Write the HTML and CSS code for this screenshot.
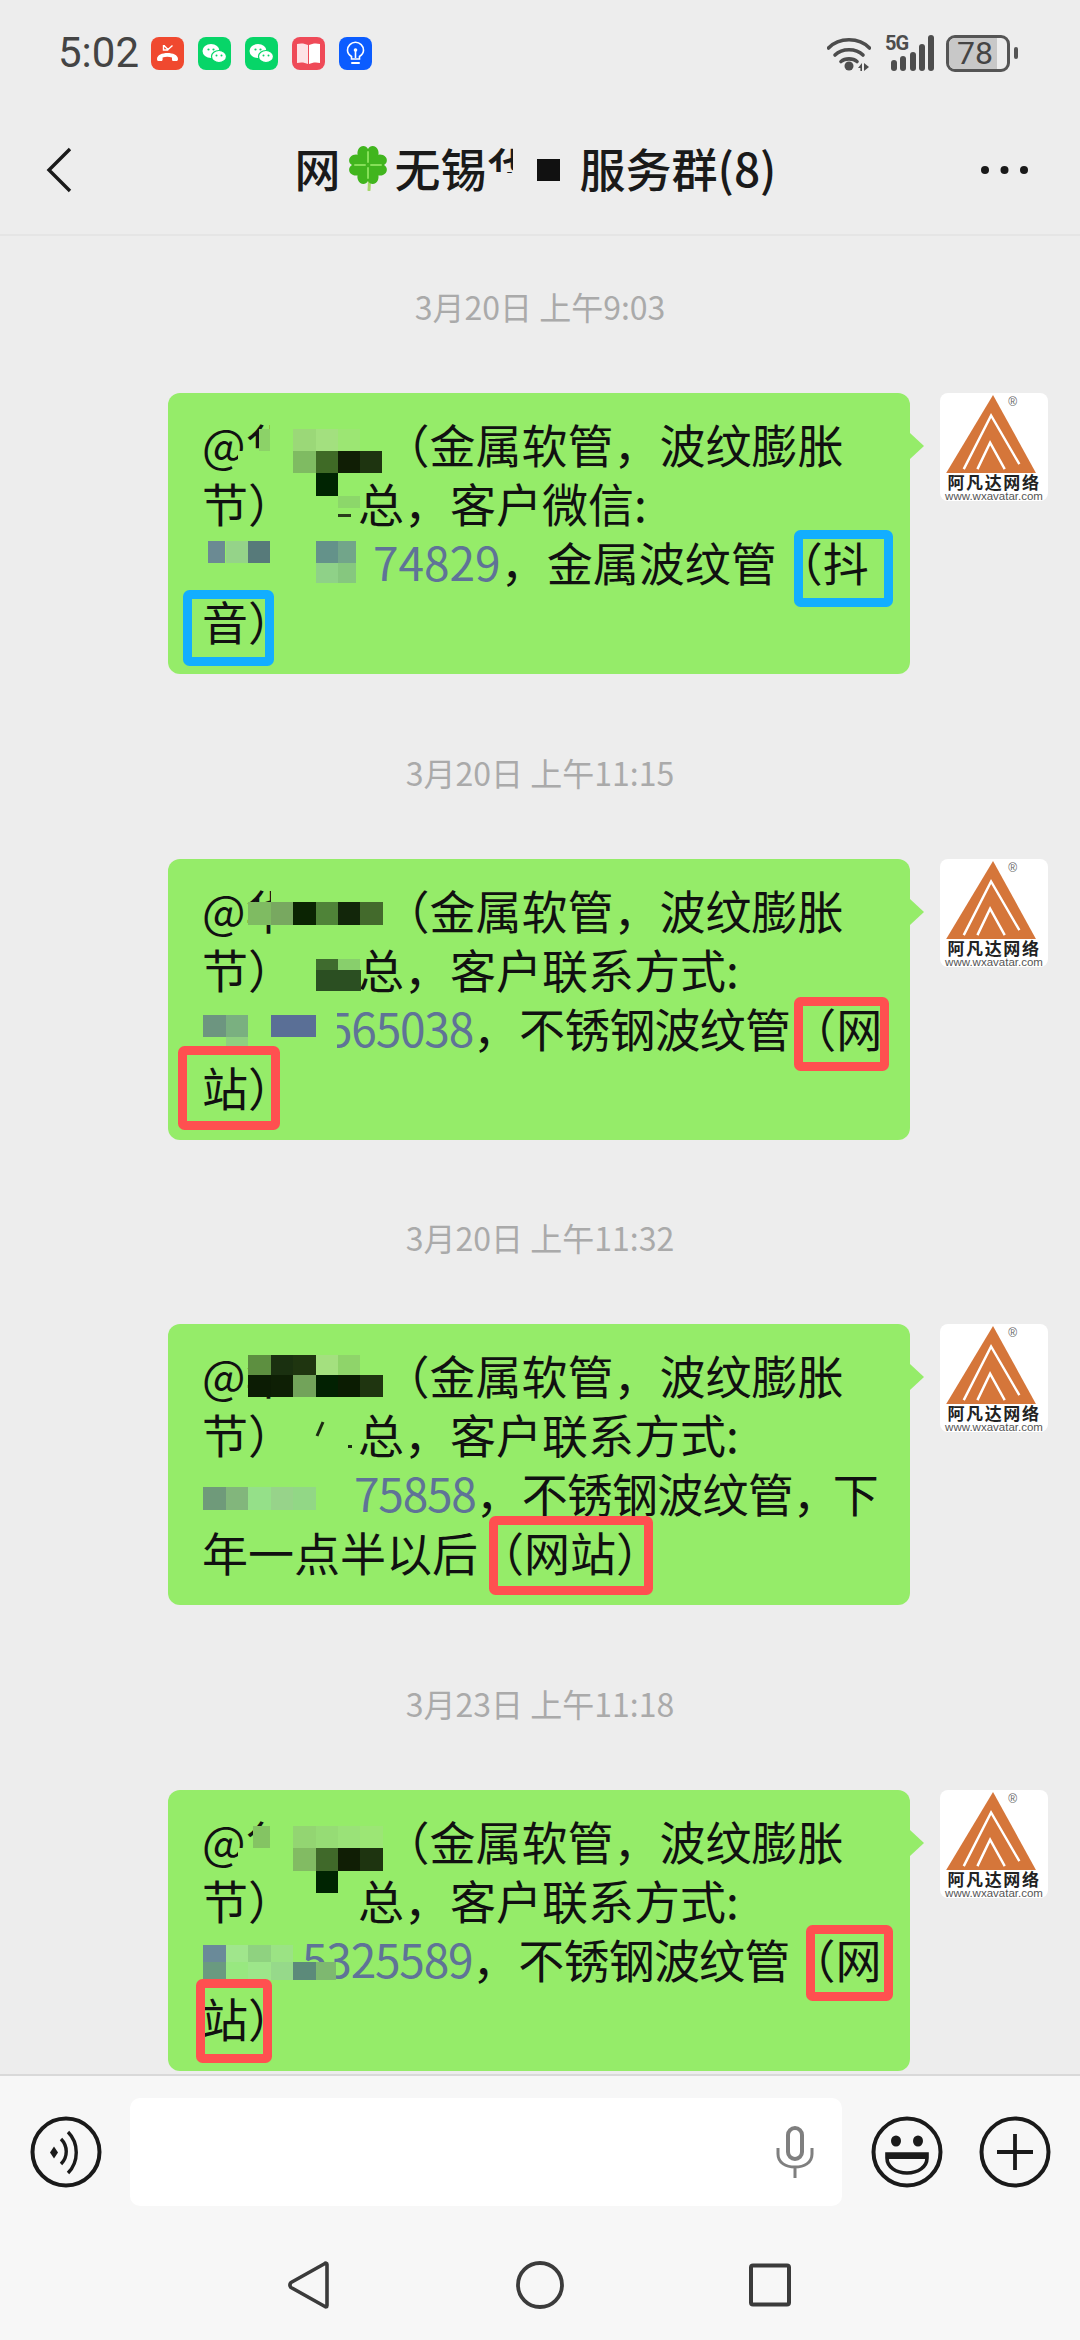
FILE: index.html
```html
<!DOCTYPE html>
<html lang="zh-CN">
<head>
<meta charset="UTF-8" />
<meta name="viewport" content="width=device-width, initial-scale=1" />
<title>服务群</title>
<link rel="stylesheet" href="styles.css">
</head>
<body>

<div class="status-bar">
  <div class="status-left">
    <span class="clock">5:02</span>
    <div class="notif-icons">
      <svg class="notif" viewBox="0 0 33 33"><rect width="33" height="33" rx="8" fill="#f0492f"/><path d="M6 22c0-8 21-8 21 0 0 1.500-.8 2-1.600 2h-3c-1 0-1.400-.6-1.400-1.500v-2c-3-1-6.400-1-9.400 0v2c0 .9-.4 1.500-1.400 1.500h-3C6.800 24 6 23.500 6 22z" fill="#fff"/><path d="M12.500 8v5h5M13 8.500l4 4 4.500-4" fill="none" stroke="#fff" stroke-width="1.400"/></svg>
      <svg class="notif" viewBox="0 0 33 33"><rect width="33" height="33" rx="8" fill="#07d568"/><ellipse cx="13" cy="14" rx="8.500" ry="7" fill="#fff"/><ellipse cx="21" cy="19.500" rx="7.500" ry="6" fill="#fff" stroke="#07d568" stroke-width="1.200"/><circle cx="10.500" cy="12.500" r="1.100" fill="#07d568"/><circle cx="15.500" cy="12.500" r="1.100" fill="#07d568"/><circle cx="18.500" cy="18.500" r="1" fill="#07d568"/><circle cx="23.500" cy="18.500" r="1" fill="#07d568"/></svg>
      <svg class="notif" viewBox="0 0 33 33"><rect width="33" height="33" rx="8" fill="#07d568"/><ellipse cx="13" cy="14" rx="8.500" ry="7" fill="#fff"/><ellipse cx="21" cy="19.500" rx="7.500" ry="6" fill="#fff" stroke="#07d568" stroke-width="1.200"/><circle cx="10.500" cy="12.500" r="1.100" fill="#07d568"/><circle cx="15.500" cy="12.500" r="1.100" fill="#07d568"/><circle cx="18.500" cy="18.500" r="1" fill="#07d568"/><circle cx="23.500" cy="18.500" r="1" fill="#07d568"/></svg>
      <svg class="notif" viewBox="0 0 33 33"><rect width="33" height="33" rx="8" fill="#ef4a58"/><path d="M5 7c4-1 8-.5 11 1v19c-3-1.500-7-2-11-1z" fill="#fde3e6"/><path d="M28 7c-4-1-8-.5-11 1v19c3-1.500 7-2 11-1z" fill="#fff"/></svg>
      <svg class="notif" viewBox="0 0 33 33"><rect width="33" height="33" rx="8" fill="#0b5cff"/><path d="M12.500 22v-2.500c-2.500-1.600-4-3.500-4-6.200a8 8 0 0 1 16 0c0 2.700-1.500 4.600-4 6.200V22z" fill="none" stroke="#fff" stroke-width="1.600"/><path d="M16.500 21v-7" stroke="#fff" stroke-width="1.600"/><circle cx="16.500" cy="13" r="1.800" fill="#fff"/><path d="M13 26h7" stroke="#fff" stroke-width="2" stroke-linecap="round"/></svg>
    </div>
  </div>
  <div class="status-right">
    <svg class="wifi" viewBox="0 0 44 36"><g fill="none" stroke="#4d4d4d" stroke-width="3.600" stroke-linecap="round"><path d="M1.500 13C12 2 32 2 42.500 13"/><path d="M8 20c7-7 21-7 28 0"/><path d="M14 26.500c4-3.500 12-3.500 16 0"/></g><circle cx="22" cy="31" r="4.500" fill="#4d4d4d"/><path d="M31 33l4-5v8h-1.600v-3zM37 28l5 4-5 4z" fill="#4d4d4d"/></svg>
    <div class="signal">
      <span class="net-label">5G</span>
      <svg class="bars" viewBox="0 0 43 36"><g fill="#4d4d4d"><rect x="0" y="25" width="6" height="11" rx="3"/><rect x="9" y="21" width="6" height="15" rx="3"/><rect x="19" y="17" width="6" height="19" rx="3"/><rect x="28" y="9" width="6" height="27" rx="3"/><rect x="37" y="0" width="6" height="36" rx="3"/></g></svg>
    </div>
    <div class="battery">
      <div class="battery-body"><span class="battery-level"></span><span class="battery-num">78</span></div>
      <span class="battery-tip"></span>
    </div>
  </div>
</div>

<div class="nav-bar">
  <svg class="back" viewBox="0 0 26 46"><path d="M24 2L3 23l21 21" fill="none" stroke="#1a1a1a" stroke-width="3.400"/></svg>
  <div class="title">
    <span>网</span>
    <svg class="clover" viewBox="0 0 46 48">
      <path d="M23 22c1 8 2 16 1 25" fill="none" stroke="#a5d86a" stroke-width="3" stroke-linecap="round"/>
      <g fill="#41b51e">
        <path d="M23 22C14 18 11 12 13 7c2-5 8-5 10-1 2-4 8-4 10 1 2 5-1 11-10 15z"/>
        <path d="M23 22C27 13 33 10 38 12c5 2 5 8 1 10 4 2 4 8-1 10-5 2-11-1-15-10z"/>
        <path d="M23 22C14 26 11 32 13 37c2 5 8 5 10 1 2 4 8 4 10-1 2-5-1-11-10-15z"/>
        <path d="M23 22C19 13 13 10 8 12c-5 2-5 8-1 10-4 2-4 8 1 10 5 2 11-1 15-10z"/>
      </g>
      <g fill="none" stroke="#86df58" stroke-width="2" stroke-linecap="round"><path d="M23 19V9M26 22h10M23 25v10M20 22H10"/></g>
    </svg>
    <span>无锡</span>
    <span class="title-cut">华</span>
    <span class="title-block"></span>
    <span>服务群(8)</span>
  </div>
  <svg class="more" viewBox="0 0 47 10"><g fill="#1a1a1a"><circle cx="4" cy="5" r="4"/><circle cx="23.500" cy="5" r="4"/><circle cx="43" cy="5" r="4"/></g></svg>
</div>

<div class="chat">

  <div class="msg-group">
    <div class="time">3月20日 上午9:03</div>
    <div class="msg-row">
      <div class="bubble">
        <div class="line">@华<span class="gap-name"></span>（金属软管，波纹膨胀</div>
        <div class="line">节）<span class="gap-sur"></span>总，客户微信:</div>
        <div class="line"><span class="phone phone-wide"><span class="gap-p1"></span>74829</span>，金属波纹管（抖</div>
        <div class="line">音）</div>
        <svg class="marks" viewBox="0 0 742 281">
          <rect x="102" y="30" width="23" height="50" fill="#95ec69"/>
          <rect x="70" y="58" width="33" height="24" fill="#95ec69"/>
          <g shape-rendering="crispEdges">
            <rect x="91" y="36" width="11" height="22" fill="#8cd268"/>
            <rect x="125" y="36" width="23" height="22" fill="#9bd878"/><rect x="148" y="36" width="22" height="22" fill="#a3e07f"/><rect x="170" y="36" width="22" height="22" fill="#9ce673"/>
            <rect x="125" y="58" width="23" height="22" fill="#7fbb62"/><rect x="148" y="58" width="22" height="22" fill="#3f6a26"/><rect x="170" y="58" width="22" height="22" fill="#101e05"/><rect x="192" y="58" width="22" height="22" fill="#1e3410"/>
            <rect x="148" y="80" width="22" height="23" fill="#002402"/>
            <rect x="170" y="103" width="22" height="12" fill="#8cd76a"/>
            <rect x="170" y="121" width="13" height="3" fill="#2a3d1c"/>
            <rect x="40" y="148" width="17" height="22" fill="#6b8a93"/><rect x="58" y="148" width="22" height="22" fill="#95d389"/><rect x="80" y="148" width="22" height="22" fill="#577a7a"/>
            <rect x="148" y="148" width="22" height="22" fill="#64928a"/><rect x="170" y="148" width="18" height="22" fill="#72a58a"/>
            <rect x="148" y="170" width="22" height="20" fill="#8fd188"/><rect x="170" y="170" width="18" height="20" fill="#86c77f"/>
          </g>
          <rect class="mark-blue" x="630.500" y="141.500" width="90" height="68" rx="2"/>
          <rect class="mark-blue" x="19.500" y="201.500" width="82" height="67" rx="2"/>
        </svg>
      </div>
      <div class="avatar">
        <svg class="logo" viewBox="0 0 108 82"><path d="M53 2L97 82H5z" fill="#d5763a"/><path d="M23 78L51 23l29 50M37 78l13-27 15 27" fill="none" stroke="#fff" stroke-width="2.500"/></svg>
        <span class="logo-r">®</span>
        <div class="logo-name">阿凡达网络</div>
        <div class="logo-url">www.wxavatar.com</div>
      </div>
    </div>
  </div>

  <div class="msg-group">
    <div class="time">3月20日 上午11:15</div>
    <div class="msg-row">
      <div class="bubble">
        <div class="line">@华<span class="gap-name"></span>（金属软管，波纹膨胀</div>
        <div class="line">节）<span class="gap-sur"></span>总，客户联系方式:</div>
        <div class="line"><span class="phone"><span class="gap-p2"></span>565038</span>，<span class="tight">不锈钢波纹管</span>（网</div>
        <div class="line">站）</div>
        <svg class="marks" viewBox="0 0 742 281">
          <rect x="103" y="32" width="112" height="40" fill="#95ec69"/>
          <rect x="150" y="142" width="19" height="50" fill="#95ec69"/>
          <g shape-rendering="crispEdges">
            <rect x="80" y="43" width="23" height="23" fill="#7fbb62"/><rect x="103" y="43" width="22" height="23" fill="#78a860"/><rect x="125" y="43" width="23" height="23" fill="#0b2403"/>
            <rect x="148" y="43" width="22" height="23" fill="#4f8338"/><rect x="170" y="43" width="22" height="23" fill="#12260a"/><rect x="192" y="43" width="23" height="23" fill="#436a2c"/>
            <rect x="170" y="100" width="22" height="11" fill="#88cf6c"/><rect x="148" y="100" width="22" height="11" fill="#3f6b2e"/>
            <rect x="148" y="111" width="45" height="21" fill="#2b4f22"/>
            <rect x="35" y="156" width="23" height="22" fill="#6d9580"/><rect x="58" y="156" width="22" height="22" fill="#7ab080"/>
            <rect x="103" y="156" width="45" height="22" fill="#5a6f96"/><rect x="58" y="178" width="22" height="9" fill="#8fd080"/>
          </g>
          <rect class="mark-red" x="630.500" y="142.500" width="86" height="65" rx="2"/>
          <rect class="mark-red" x="14.500" y="191.500" width="93" height="75" rx="2"/>
        </svg>
      </div>
      <div class="avatar">
        <svg class="logo" viewBox="0 0 108 82"><path d="M53 2L97 82H5z" fill="#d5763a"/><path d="M23 78L51 23l29 50M37 78l13-27 15 27" fill="none" stroke="#fff" stroke-width="2.500"/></svg>
        <span class="logo-r">®</span>
        <div class="logo-name">阿凡达网络</div>
        <div class="logo-url">www.wxavatar.com</div>
      </div>
    </div>
  </div>

  <div class="msg-group">
    <div class="time">3月20日 上午11:32</div>
    <div class="msg-row">
      <div class="bubble">
        <div class="line">@华<span class="gap-name"></span>（金属软管，波纹膨胀</div>
        <div class="line">节）<span class="gap-sur"></span>总，客户联系方式:</div>
        <div class="line"><span class="phone"><span class="gap-p3"></span>75858</span>，<span class="tight">不锈钢波纹管</span><span class="tight-comma">，</span>下</div>
        <div class="line">年一点半以后（网站）</div>
        <svg class="marks" viewBox="0 0 742 281">
          <g shape-rendering="crispEdges">
            <rect x="80" y="31" width="23" height="20" fill="#5d8f40"/><rect x="103" y="31" width="22" height="20" fill="#1a3010"/><rect x="125" y="31" width="23" height="20" fill="#1f3510"/>
            <rect x="148" y="31" width="22" height="20" fill="#a4e07f"/><rect x="170" y="31" width="22" height="20" fill="#8fd46a"/>
            <rect x="80" y="51" width="23" height="22" fill="#0c1c04"/><rect x="103" y="51" width="22" height="22" fill="#0e1f05"/><rect x="125" y="51" width="23" height="22" fill="#72a35a"/>
            <rect x="148" y="51" width="22" height="22" fill="#022102"/><rect x="170" y="51" width="22" height="22" fill="#0b1c02"/><rect x="192" y="51" width="23" height="22" fill="#1f3510"/>
            <rect x="35" y="163" width="23" height="23" fill="#6f9a7a"/><rect x="58" y="163" width="22" height="23" fill="#82b67c"/><rect x="80" y="163" width="23" height="23" fill="#95e089"/>
            <rect x="103" y="163" width="22" height="23" fill="#97d38a"/><rect x="125" y="163" width="23" height="23" fill="#92d786"/>
          </g>
          <path d="M155 98l-6 14" stroke="#1c2c12" stroke-width="3"/>
          <rect x="180" y="121" width="4" height="3" fill="#1c2c12"/>
          <rect class="mark-red" x="325.500" y="196.500" width="155" height="70" rx="2"/>
        </svg>
      </div>
      <div class="avatar">
        <svg class="logo" viewBox="0 0 108 82"><path d="M53 2L97 82H5z" fill="#d5763a"/><path d="M23 78L51 23l29 50M37 78l13-27 15 27" fill="none" stroke="#fff" stroke-width="2.500"/></svg>
        <span class="logo-r">®</span>
        <div class="logo-name">阿凡达网络</div>
        <div class="logo-url">www.wxavatar.com</div>
      </div>
    </div>
  </div>

  <div class="msg-group">
    <div class="time">3月23日 上午11:18</div>
    <div class="msg-row">
      <div class="bubble">
        <div class="line">@华<span class="gap-name"></span>（金属软管，波纹膨胀</div>
        <div class="line">节）<span class="gap-sur"></span>总，客户联系方式:</div>
        <div class="line"><span class="phone"><span class="gap-p4"></span>5325589</span>，<span class="tight">不锈钢波纹管</span>（网</div>
        <div class="line">站）</div>
        <svg class="marks" viewBox="0 0 742 281">
          <rect x="100" y="30" width="25" height="40" fill="#95ec69"/>
          <rect x="70" y="58" width="33" height="24" fill="#95ec69"/>
          <g shape-rendering="crispEdges">
            <rect x="85" y="36" width="17" height="22" fill="#84c463"/>
            <rect x="125" y="36" width="23" height="22" fill="#93d572"/><rect x="148" y="36" width="22" height="22" fill="#96dc75"/><rect x="170" y="36" width="22" height="22" fill="#9ae278"/><rect x="192" y="36" width="23" height="22" fill="#9ce675"/>
            <rect x="125" y="58" width="23" height="23" fill="#82bb63"/><rect x="148" y="58" width="22" height="23" fill="#40692a"/><rect x="170" y="58" width="22" height="23" fill="#101e05"/><rect x="192" y="58" width="23" height="23" fill="#1e3410"/>
            <rect x="148" y="81" width="22" height="22" fill="#002402"/>
            <rect x="35" y="155" width="23" height="17" fill="#6a8a99"/><rect x="35" y="172" width="23" height="18" fill="#6a9a80"/>
            <rect x="58" y="155" width="22" height="17" fill="#a0e68c"/><rect x="58" y="172" width="22" height="18" fill="#98e880"/>
            <rect x="80" y="155" width="23" height="17" fill="#8fd280"/><rect x="80" y="172" width="23" height="18" fill="#9de68a"/>
            <rect x="103" y="155" width="22" height="17" fill="#9be384"/><rect x="103" y="172" width="22" height="18" fill="#96d98a"/>
            <rect x="125" y="172" width="23" height="18" fill="#5c8a7a"/><rect x="148" y="172" width="20" height="18" fill="#7eb870"/>
          </g>
          <rect class="mark-red" x="642.500" y="139.500" width="78" height="67" rx="2"/>
          <rect class="mark-red" x="32.500" y="193.500" width="67" height="75" rx="2"/>
        </svg>
      </div>
      <div class="avatar">
        <svg class="logo" viewBox="0 0 108 82"><path d="M53 2L97 82H5z" fill="#d5763a"/><path d="M23 78L51 23l29 50M37 78l13-27 15 27" fill="none" stroke="#fff" stroke-width="2.500"/></svg>
        <span class="logo-r">®</span>
        <div class="logo-name">阿凡达网络</div>
        <div class="logo-url">www.wxavatar.com</div>
      </div>
    </div>
  </div>

</div>

<div class="footer">
  <div class="input-row">
    <svg class="round-btn" viewBox="0 0 72 72"><circle cx="36" cy="36" r="33.500" fill="none" stroke="#1a1a1a" stroke-width="4"/><path d="M20 36.500l4-6 4 6-4 6z" fill="#1a1a1a"/><path d="M31 23c7 7 7 18 0 25M38 16c11 11 11 30 0 41" fill="none" stroke="#1a1a1a" stroke-width="3.400"/></svg>
    <div class="input-box">
      <svg class="mic" viewBox="0 0 38 52"><rect x="12" y="2" width="14" height="31" rx="7" fill="none" stroke="#7f7f7f" stroke-width="4"/><path d="M2 22v6c0 9 8 13 17 13s17-4 17-13v-6M19 41v11" fill="none" stroke="#7f7f7f" stroke-width="3"/></svg>
    </div>
    <svg class="round-btn" viewBox="0 0 72 72"><circle cx="36" cy="36" r="33.500" fill="none" stroke="#1a1a1a" stroke-width="4"/><ellipse cx="25" cy="25" rx="5" ry="5.500" fill="#1a1a1a"/><ellipse cx="47" cy="25" rx="5" ry="5.500" fill="#1a1a1a"/><path d="M16 38h40v4c0 9-9 15-20 15S16 51 16 42z" fill="none" stroke="#1a1a1a" stroke-width="3.600"/><path d="M16 38h40v5H16z" fill="#1a1a1a"/></svg>
    <svg class="round-btn" viewBox="0 0 72 72"><circle cx="36" cy="36" r="33.500" fill="none" stroke="#1a1a1a" stroke-width="4"/><path d="M36 18v36M18 36h36" stroke="#1a1a1a" stroke-width="3.800"/></svg>
  </div>
  <div class="sys-nav">
    <svg class="sys-back" viewBox="0 0 42 48"><path d="M39 3.500v41c0 1.500-1.500 1.800-2.500.8L3 26.500c-1.300-1.500-1.300-3.500 0-5L36.500 2.700c1-1 2.500-.7 2.500.8z" fill="none" stroke="#3b3b3b" stroke-width="3.600" stroke-linejoin="round"/></svg>
    <svg class="sys-home" viewBox="0 0 48 48"><circle cx="24" cy="24" r="22" fill="none" stroke="#3b3b3b" stroke-width="3.800"/></svg>
    <svg class="sys-recent" viewBox="0 0 42 44"><rect x="2" y="2.500" width="38" height="39" rx="2" fill="none" stroke="#3b3b3b" stroke-width="4"/></svg>
  </div>
</div>

</body>
</html>
```

FILE: styles.css
```css
* {
  box-sizing: border-box;
}
body {
  margin: 0;
  width: 1080px;
  height: 2340px;
  display: flex;
  flex-direction: column;
  overflow: hidden;
  background: #ededed;
  font-family: "Noto Sans CJK SC", "Noto Sans", sans-serif;
  color: #1a1a1a;
}
svg {
  display: block;
  flex: none;
}

/* status bar */
.status-bar {
  height: 106px;
  padding: 0 62px 0 58px;
  display: flex;
  align-items: center;
  justify-content: space-between;
}
.status-left {
  display: flex;
  align-items: center;
  gap: 13px;
}
.clock {
  width: 80px;
  font-family: Roboto, sans-serif;
  font-size: 42px;
  line-height: 40px;
  color: #444;
}
.notif-icons {
  display: flex;
  gap: 14px;
}
.notif {
  width: 33px;
  height: 33px;
}
.status-right {
  display: flex;
  align-items: center;
}
.wifi {
  width: 44px;
  height: 36px;
}
.signal {
  position: relative;
  width: 49px;
  height: 36px;
  margin-left: 14px;
  margin-right: 12px;
}
.bars {
  position: absolute;
  left: 6px;
  top: 0;
  width: 43px;
  height: 36px;
}
.net-label {
  position: absolute;
  left: 0;
  top: -2px;
  font-family: "Roboto", sans-serif;
  font-size: 20px;
  line-height: 20px;
  font-weight: 700;
  letter-spacing: -1px;
  color: #4d4d4d;
  background: #ededed;
}
.battery {
  display: flex;
  align-items: center;
  gap: 4px;
}
.battery-body {
  position: relative;
  width: 64px;
  height: 37px;
  border: 3px solid #555;
  border-radius: 9px;
  overflow: hidden;
  text-align: center;
}
.battery-level {
  position: absolute;
  left: 0;
  top: 0;
  bottom: 0;
  width: 48px;
  background: #c8c8c8;
}
.battery-num {
  position: relative;
  display: block;
  padding-right: 6px;
  font-family: Roboto, sans-serif;
  font-size: 32px;
  line-height: 31px;
  color: #444;
}
.battery-tip {
  width: 4px;
  height: 12px;
  border-radius: 2px;
  background: #555;
}

/* title bar */
.nav-bar {
  height: 130px;
  padding: 0 52px 0 46px;
  display: flex;
  align-items: center;
  justify-content: space-between;
  border-bottom: 2px solid #e5e5e5;
}
.back {
  width: 26px;
  height: 46px;
}
.title {
  display: flex;
  align-items: center;
  margin: 0 0 6px 18px;
  font-size: 46px;
  font-weight: 500;
  line-height: 60px;
  white-space: nowrap;
}
.clover {
  width: 46px;
  height: 48px;
  margin: 0 4px;
}
/* the surname is smeared over in the source, only its top left shows */
.title-cut {
  position: relative;
  width: 46px;
  margin-right: -18px;
}
.title-cut::after {
  content: "";
  position: absolute;
  left: 0;
  top: 36px;
  width: 46px;
  height: 20px;
  background: #ededed;
}
.title-cut::before {
  content: "";
  position: absolute;
  left: 26px;
  top: 0;
  width: 20px;
  height: 50px;
  background: #ededed;
}
.title-block {
  position: relative;
  z-index: 1;
  width: 23px;
  height: 22px;
  margin: 6px 20px 0 22px;
  background: #111;
}
.more {
  width: 47px;
  height: 10px;
}

/* messages */
.chat {
  flex: 1;
  overflow: hidden;
}
.msg-group {
  padding: 48px 32px 27.5px 168px;
}
.time {
  width: 1080px;
  height: 44px;
  margin: 0 0 65px -168px;
  text-align: center;
  font-size: 32px;
  line-height: 44px;
  color: #aaa;
}
.msg-row {
  display: flex;
  align-items: flex-start;
  gap: 30px;
}
.bubble {
  position: relative;
  width: 742px;
  height: 281px;
  padding: 21px 0 24px 34px;
  border-radius: 12px;
  background: #95ec69;
  font-size: 46px;
  color: #111;
}
.bubble::after {
  content: "";
  position: absolute;
  right: -14px;
  top: 40px;
  border-left: 14px solid #95ec69;
  border-top: 13px solid transparent;
  border-bottom: 13px solid transparent;
}
.line {
  height: 59px;
  line-height: 59px;
  white-space: nowrap;
}
.phone {
  color: #5f7397;
  letter-spacing: -1.2px;
}
.phone-wide {
  letter-spacing: 0;
}
.tight {
  letter-spacing: -0.8px;
}
.tight-comma {
  letter-spacing: -6px;
}
.gap-name {
  display: inline-block;
  width: 92px;
}
.gap-sur {
  display: inline-block;
  width: 64px;
}
.gap-p1 {
  display: inline-block;
  width: 171px;
}
.gap-p2 {
  display: inline-block;
  width: 125px;
}
.gap-p3 {
  display: inline-block;
  width: 152px;
}
.gap-p4 {
  display: inline-block;
  width: 100px;
}

/* mosaic patches and the drawn boxes sit on top of the text */
.marks {
  position: absolute;
  left: 0;
  top: 0;
  width: 742px;
  height: 281px;
}
.mark-blue {
  fill: none;
  stroke: #12aeff;
  stroke-width: 9;
}
.mark-red {
  fill: none;
  stroke: #ff5050;
  stroke-width: 9;
}

/* avatar */
.avatar {
  position: relative;
  width: 108px;
  height: 108px;
  border-radius: 8px;
  background: #fff;
  text-align: center;
  overflow: hidden;
}
.logo {
  width: 108px;
  height: 80px;
}
.logo-r {
  position: absolute;
  top: 3px;
  right: 31px;
  font-family: "Liberation Sans", sans-serif;
  font-size: 12px;
  line-height: 12px;
  color: #666;
}
.logo-name {
  height: 18px;
  font-size: 17px;
  line-height: 18px;
  font-weight: 700;
  letter-spacing: 1.6px;
  color: #222;
}
.logo-url {
  font-family: "Liberation Sans", sans-serif;
  font-size: 11.5px;
  line-height: 11px;
  color: #555;
}

/* input + system nav */
.footer {
  height: 266px;
  background: #f7f7f7;
  border-top: 2px solid #d9d9d9;
}
.input-row {
  height: 130px;
  padding: 21px 29px 0 30px;
  display: flex;
  align-items: center;
}
.round-btn {
  width: 72px;
  height: 72px;
}
.input-box {
  width: 712px;
  height: 108px;
  margin: 0 29px 0 28px;
  padding-right: 28px;
  display: flex;
  align-items: center;
  justify-content: flex-end;
  border-radius: 10px;
  background: #fff;
}
.input-box + .round-btn {
  margin-right: 36px;
}
.mic {
  width: 38px;
  height: 52px;
}
.sys-nav {
  height: 48px;
  margin-top: 55px;
  padding-left: 288px;
  display: flex;
  align-items: center;
}
.sys-back {
  width: 42px;
  height: 48px;
}
.sys-home {
  width: 48px;
  height: 48px;
  margin-left: 186px;
}
.sys-recent {
  width: 42px;
  height: 44px;
  margin-left: 185px;
}
```
